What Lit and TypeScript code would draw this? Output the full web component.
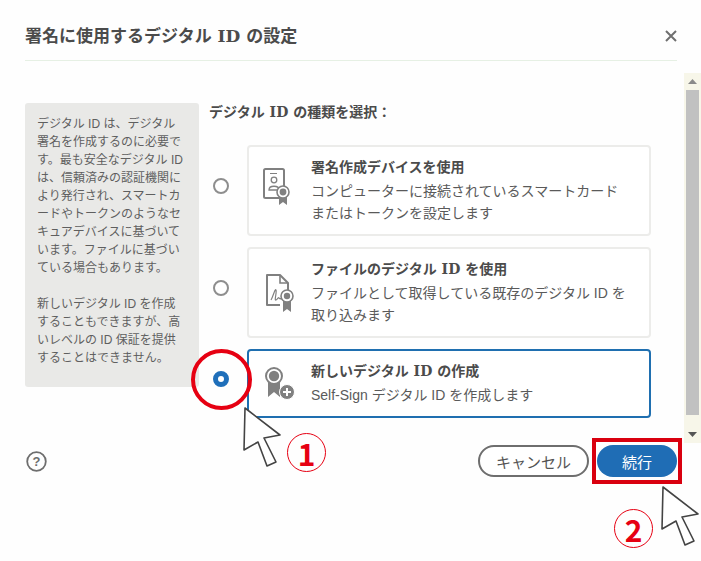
import { LitElement, html, css, svg } from "lit";
import { customElement } from "lit/decorators.js";

const cursor = svg`<path d="M2 1 L1 43 L15 35 L24 59 L33 55 L21 31 L37 28 Z" fill="#fff" stroke="#444" stroke-width="1.6" stroke-linejoin="round"/>`;

@customElement("app-root")
export class AppRoot extends LitElement {
  static styles = css`
    :host {
      display: flex; flex-direction: column; position: relative;
      width: 701px; height: 561px; overflow: hidden; background: #fefefe; color: #4b4b4b;
      font-family: "Liberation Sans", "Noto Sans CJK JP", sans-serif;
    }
    .header {
      height: 61px; box-sizing: border-box; margin: 0 24px 0 25px; border-bottom: 1px solid #e6f0e4;
      display: flex; align-items: center; justify-content: space-between; padding-top: 22px; padding-bottom: 11px;
    }
    .title { font-family: "DejaVu Serif", "Noto Sans CJK JP", sans-serif; font-size: 17px; font-weight: 700; color: #4b4b4b; line-height: 24px; }
    .close { width: 12px; height: 12px; display: block; }
    .scrollwrap { display: flex; margin-top: 12px; height: 370px; }
    .content { flex: 1; display: flex; align-items: flex-start; padding: 30px 0 0 25px; gap: 10px; }
    .side {
      width: 174px; height: 284px; box-sizing: border-box; flex: none; background: #e9e9e7; border-radius: 3px;
      padding: 12px 15px 12px 12px; font-size: 12px; line-height: 18px; color: #5f5f5f;
    }
    .side p { margin: 0 0 18px; }
    .main { width: 442px; flex: none; margin-top: -1px; }
    .head { font-family: "DejaVu Serif", "Noto Sans CJK JP", sans-serif; font-size: 14px; font-weight: 700; line-height: 20px; height: 20px; color: #4b4b4b; }
    .options { display: flex; flex-direction: column; gap: 11px; margin-top: 23px; }
    .opt { display: flex; align-items: center; gap: 18px; padding-left: 4px; }
    .radio { width: 16px; height: 16px; box-sizing: border-box; border: 2px solid #8e8e8e; border-radius: 50%; flex: none; background: #fff; margin-bottom: 10px; }
    .radio.on { border: 5.5px solid #1f6fba; }
    .card {
      width: 404px; box-sizing: border-box; height: 91px; border: 2px solid #ececea; border-radius: 4px; background: #fff;
      display: flex; align-items: flex-start; padding: 10px 0 0 11px; gap: 11px;
    }
    .card.on { height: 69px; border: 2px solid #1f6fb0; }
    .icon { width: 40px; height: 52px; flex: none; margin-top: 8px; display: block; }
    .card.on .icon { margin-top: 6px; }
    .ct { font-family: "DejaVu Serif", "Noto Sans CJK JP", sans-serif; font-size: 14px; font-weight: 700; line-height: 20px; color: #4b4b4b; }
    .cd { font-size: 14px; line-height: 22px; margin-top: 3px; color: #5a5a5a; white-space: pre-line; }
    .bar { width: 17px; flex: none; background: #f7f6e9; display: flex; flex-direction: column; align-items: center; }
    .thumb { width: 13px; flex: 1; background: #c1c1c1; margin-bottom: 11px; }
    .arr { height: 17px; flex: none; display: flex; align-items: center; justify-content: center; }
    .tri { width: 9px; height: 5px; display: block; }
    .footer { display: flex; align-items: center; justify-content: space-between; margin-top: 2px; padding: 0 24px 0 26px; height: 32px; }
    .help { width: 21px; height: 21px; display: block; }
    .btns { display: flex; gap: 8px; }
    .btn {
      height: 32px; box-sizing: border-box; border-radius: 16px; font-size: 15px; display: flex; align-items: center; justify-content: center;
    }
    .cancel { width: 111px; border: 2px solid #6e6e6e; color: #555; background: #fff; }
    .go { width: 80px; background: #1f6db5; color: #fff; }
    .ann { position: absolute; }
    .ring { left: 191px; top: 349px; width: 61px; height: 61px; box-sizing: border-box; border: 4px solid #e60012; border-radius: 50%; }
    .box { left: 592px; top: 438px; width: 90px; height: 46px; box-sizing: border-box; border: 4px solid #d9000f; }
    .c1 { left: 243px; top: 407px; width: 42px; height: 60px; }
    .c2 { left: 661px; top: 486px; width: 42px; height: 60px; }
    .num {
      width: 39px; height: 39px; box-sizing: border-box; border: 1.5px solid #e60012; border-radius: 50%; color: #e60012;
      font-size: 30px; font-weight: 700; display: flex; align-items: center; justify-content: center; line-height: 1;
      font-family: "Noto Sans CJK JP", sans-serif;
    }
    .n1 { left: 287px; top: 433px; }
    .n2 { left: 614px; top: 509px; }
  `;

  render() {
    return html`
      <div class="header">
        <div class="title">署名に使用するデジタル ID の設定</div>
        <svg class="close" viewBox="0 0 12 12"><path d="M1 1 L11 11 M11 1 L1 11" stroke="#6f6f6f" stroke-width="2"/></svg>
      </div>
      <div class="scrollwrap">
        <div class="content">
          <div class="side">
            <p>デジタル ID は、デジタル署名を作成するのに必要です。最も安全なデジタル ID は、信頼済みの認証機関により発行され、スマートカードやトークンのようなセキュアデバイスに基づいています。ファイルに基づいている場合もあります。</p>
            <p>新しいデジタル ID を作成することもできますが、高いレベルの ID 保証を提供することはできません。</p>
          </div>
          <div class="main">
            <div class="head">デジタル ID の種類を選択：</div>
            <div class="options">
              <div class="opt">
                <div class="radio"></div>
                <div class="card">
                  <svg class="icon" viewBox="0 0 40 52" fill="none">
                    <rect x="4" y="4" width="20" height="29" rx="1.5" stroke="#808080" stroke-width="2"/>
                    <path d="M10 8.5 H17" stroke="#808080" stroke-width="1"/>
                    <circle cx="14" cy="15" r="2.8" stroke="#808080" stroke-width="1.3"/>
                    <path d="M9 25 C9 20 19 20 19 25 Z" stroke="#808080" stroke-width="1.3"/>
                    <path d="M19 31 V40 L23 37 L27 40 V31 Z" fill="#808080"/>
                    <circle cx="23" cy="27" r="6" fill="#fff" stroke="#808080" stroke-width="1.6"/>
                    <circle cx="23" cy="27" r="3.4" fill="#808080"/>
                  </svg>
                  <div>
                    <div class="ct">署名作成デバイスを使用</div>
                    <div class="cd">コンピューターに接続されているスマートカード
またはトークンを設定します</div>
                  </div>
                </div>
              </div>
              <div class="opt">
                <div class="radio"></div>
                <div class="card">
                  <svg class="icon" viewBox="0 0 40 52" fill="none">
                    <path d="M20 38 H7 V8 H20 L28 16 V23" stroke="#808080" stroke-width="2" stroke-linejoin="round"/>
                    <path d="M20 8 V16 H28" stroke="#808080" stroke-width="1.6"/>
                    <path d="M11 33 C13 30 15 21 16 23 C17 25 14 34 16 33 C18 32 18 30 19 31 C20 32 21 32 22 31" stroke="#808080" stroke-width="1.2"/>
                    <path d="M23 33 V45 L27 42 L31 45 V33 Z" fill="#808080"/>
                    <circle cx="27" cy="29" r="6" fill="#fff" stroke="#808080" stroke-width="1.6"/>
                    <circle cx="27" cy="29" r="3.2" fill="#808080"/>
                  </svg>
                  <div>
                    <div class="ct">ファイルのデジタル ID を使用</div>
                    <div class="cd">ファイルとして取得している既存のデジタル ID を
取り込みます</div>
                  </div>
                </div>
              </div>
              <div class="opt">
                <div class="radio on"></div>
                <div class="card on">
                  <svg class="icon" viewBox="0 0 40 52" fill="none">
                    <path d="M8 15 V30 L14 25 L20 30 V15 Z" fill="#808080"/>
                    <circle cx="14" cy="9" r="8" fill="#fff" stroke="#808080" stroke-width="2"/>
                    <circle cx="14" cy="9" r="5.2" fill="#808080"/>
                    <circle cx="27" cy="25" r="7.5" fill="#808080" stroke="#fff" stroke-width="1"/>
                    <path d="M27 21 V29 M23 25 H31" stroke="#fff" stroke-width="2"/>
                  </svg>
                  <div>
                    <div class="ct">新しいデジタル ID の作成</div>
                    <div class="cd">Self-Sign デジタル ID を作成します</div>
                  </div>
                </div>
              </div>
            </div>
          </div>
        </div>
        <div class="bar">
          <div class="arr"><svg class="tri" viewBox="0 0 9 5"><path d="M4.5 0 L9 5 H0 Z" fill="#8a8a8a"/></svg></div>
          <div class="thumb"></div>
          <div class="arr"><svg class="tri" viewBox="0 0 9 5"><path d="M0 0 H9 L4.5 5 Z" fill="#555"/></svg></div>
        </div>
      </div>
      <div class="footer">
        <svg class="help" viewBox="0 0 21 21" fill="none">
          <circle cx="10.5" cy="10.5" r="9.3" stroke="#6e6e6e" stroke-width="1.8"/>
          <text x="10.5" y="15" text-anchor="middle" font-size="13" font-weight="700" fill="#6e6e6e" font-family="Liberation Sans">?</text>
        </svg>
        <div class="btns">
          <div class="btn cancel">キャンセル</div>
          <div class="btn go">続行</div>
        </div>
      </div>
      <div class="ann ring"></div>
      <div class="ann box"></div>
      <svg class="ann c1" viewBox="0 0 42 60">${cursor}</svg>
      <svg class="ann c2" viewBox="0 0 42 60">${cursor}</svg>
      <div class="ann num n1">1</div>
      <div class="ann num n2">2</div>
    `;
  }
}
